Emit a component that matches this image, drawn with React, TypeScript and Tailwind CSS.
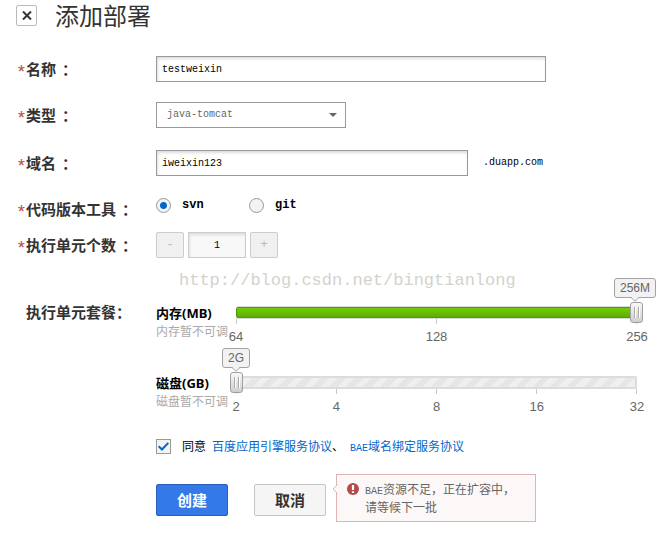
import React, { useState } from 'react';

interface FieldProps {
  label: string;
  htmlFor?: string;
  required?: boolean;
  className?: string;
  children: React.ReactNode;
}

const Field: React.FC<FieldProps> = ({ label, htmlFor, required, className, children }) => (
  <div className={`flex ${className ?? ''}`}>
    <label
      htmlFor={htmlFor}
      className="flex h-[26px] w-[140px] shrink-0 items-center text-[15px] leading-5 font-bold text-[#333]"
    >
      <span className="w-[10px] pt-2 font-['Liberation_Mono'] text-lg leading-5 font-normal text-[#b94a48]">
        {required ? '*' : ''}
      </span>
      <span className={required ? 'mr-[6px]' : ''}>{label}</span>
      <span>：</span>
    </label>
    {children}
  </div>
);

interface SliderProps {
  id: string;
  title: string;
  hint: string;
  bubble: string;
  marks: number[];
  value: number;
}

const Slider: React.FC<SliderProps> = ({ id, title, hint, bubble, marks, value }) => {
  const percent = (value / (marks.length - 1)) * 100;

  return (
    <div className="flex">
      <div className="w-20 shrink-0">
        <label
          htmlFor={id}
          className="block text-[13px] leading-5 font-bold text-black font-['Noto_Sans','Noto_Sans_CJK_SC',sans-serif]"
        >
          {title}
        </label>
        <p className="text-xs leading-4 text-[#aaa]">{hint}</p>
      </div>
      <div className="max-w-[401px] flex-1 pt-[3px]">
        <div className="relative h-[13px] rounded-xs border-y-2 border-r-2 border-[#dcdcdc] bg-[repeating-linear-gradient(135deg,#e6e6e6_0px,#e6e6e6_6px,#efefef_6px,#efefef_12px)]">
          {percent > 0 && (
            <div
              className="absolute -top-px h-[11px] rounded-l-xs border border-[#4f9a0c] bg-linear-to-b from-[#74cc0c] to-[#5cb000]"
              style={{ width: `${percent}%` }}
            />
          )}
          <input
            id={id}
            type="range"
            min={0}
            max={marks.length - 1}
            value={value}
            disabled
            readOnly
            className="absolute -top-[6px] -left-[6px] h-[21px] w-[calc(100%+14px)] appearance-none bg-transparent [&::-webkit-slider-thumb]:h-[21px] [&::-webkit-slider-thumb]:w-[13px] [&::-webkit-slider-thumb]:appearance-none [&::-webkit-slider-thumb]:rounded-[3px] [&::-webkit-slider-thumb]:border [&::-webkit-slider-thumb]:border-[#a0a0a0] [&::-webkit-slider-thumb]:bg-[linear-gradient(90deg,transparent_3px,#aaa_3px,#aaa_4px,#fff_4px,#fff_5px,transparent_5px,transparent_7px,#aaa_7px,#aaa_8px,#fff_8px,#fff_9px,transparent_9px),linear-gradient(#f8f8f8,#cfcfcf)] [&::-webkit-slider-thumb]:bg-[size:100%_11px,100%_100%] [&::-webkit-slider-thumb]:bg-[position:0_4px,0_0] [&::-webkit-slider-thumb]:bg-no-repeat"
          />
          <div
            className="absolute bottom-[19px] flex w-0 justify-center"
            style={{ left: `${percent}%` }}
          >
            <output
              htmlFor={id}
              className="relative h-[20px] rounded-[3px] border border-[#a3a3a3] bg-[#f2f2f2] px-[5px] font-['Liberation_Sans'] text-xs leading-[18px] text-[#666]"
            >
              {bubble}
              <svg className="absolute top-[18px] left-1/2 -ml-1" width="8" height="5" viewBox="0 0 8 5">
                <path d="M0 0h8L4 4z" fill="#f2f2f2" />
                <path d="M0 .5L4 4.3 8 .5" fill="none" stroke="#a3a3a3" />
              </svg>
            </output>
          </div>
        </div>
        <div className="flex h-[5px] justify-between">
          {marks.map((mark) => (
            <span key={mark} className="w-px bg-[#c8c8c8]" />
          ))}
        </div>
        <div className="mt-[3px] flex justify-between font-['Liberation_Sans'] text-[13px] leading-5 text-[#666]">
          {marks.map((mark) => (
            <span key={mark} className="flex w-0 justify-center">
              {mark}
            </span>
          ))}
        </div>
      </div>
    </div>
  );
};

const inputClass =
  "h-[26px] w-full border border-[#999] bg-white px-[5px] font-['Liberation_Mono'] text-[10px] text-black shadow-[inset_1px_2px_3px_#ddd] outline-none";
const stepClass =
  "h-[26px] w-7 rounded-xs border border-[#ccc] bg-[#f0f0f0] pb-px font-['Liberation_Mono'] text-xs text-[#b8b8b8]";

const tools = ['svn', 'git'];

export default function App() {
  const [name, setName] = useState('testweixin');
  const [domain, setDomain] = useState('iweixin123');
  const [tool, setTool] = useState('svn');
  const [agreed, setAgreed] = useState(true);

  return (
    <div className="min-h-screen bg-white pr-3 pb-4 pl-4 font-['Noto_Sans_CJK_SC',sans-serif] text-xs text-black">
      <header className="flex h-[30px] items-center">
        <button
          type="button"
          aria-label="关闭"
          className="flex h-[21px] w-[21px] items-center justify-center rounded-xs border border-[#bbb] bg-white"
        >
          <svg width="10" height="9" viewBox="0 0 10 9" fill="none" stroke="#333" strokeWidth="2">
            <path d="M1 .5l8 8M9 .5l-8 8" />
          </svg>
        </button>
        <h1 className="ml-[18px] pt-1 font-['Liberation_Sans','Noto_Sans_CJK_SC',sans-serif] text-2xl leading-[26px] text-[#333]">
          添加部署
        </h1>
      </header>

      <form onSubmit={(e) => e.preventDefault()}>
        <Field label="名称" htmlFor="name" required className="mt-[26px]">
          <div className="max-w-[390px] flex-1">
            <input id="name" value={name} onChange={(e) => setName(e.target.value)} className={inputClass} />
          </div>
        </Field>

        <Field label="类型" htmlFor="type" required className="mt-5">
          <div className="relative max-w-[190px] flex-1">
            <select
              id="type"
              className="h-[26px] w-full appearance-none border border-[#999] bg-white px-[10px] font-['Liberation_Mono'] text-[10px] text-[#666] outline-none"
            >
              <option>java-tomcat</option>
            </select>
            <svg className="pointer-events-none absolute top-[11px] right-[9px]" width="8" height="4" viewBox="0 0 8 4">
              <path d="M0 0h8L4 4z" fill="#666" />
            </svg>
          </div>
        </Field>

        <Field label="域名" htmlFor="domain" required className="mt-[22px]">
          <div className="max-w-[312px] flex-1">
            <input id="domain" value={domain} onChange={(e) => setDomain(e.target.value)} className={inputClass} />
          </div>
          <span className="ml-[15px] font-['Liberation_Mono'] text-[10px] leading-[26px]">.duapp.com</span>
        </Field>

        <Field label="代码版本工具" required className="mt-5">
          {tools.map((item) => (
            <label
              key={item}
              className="flex h-[18px] w-[93px] items-center font-['Liberation_Mono'] text-xs font-bold"
            >
              <input
                type="radio"
                name="tool"
                checked={tool === item}
                onChange={() => setTool(item)}
                className="mr-[11px] h-[15px] w-[15px] appearance-none rounded-full border border-[#999] bg-[#f3f3f3] checked:bg-[radial-gradient(circle,#0066cc_3px,#f3f3f3_4px)]"
              />
              {item}
            </label>
          ))}
        </Field>

        <Field label="执行单元个数" htmlFor="count" required className="mt-[10px]">
          <div className="flex gap-1">
            <button type="button" disabled aria-label="减少" className={stepClass}>
              -
            </button>
            <input
              id="count"
              value="1"
              readOnly
              className="h-[26px] w-[58px] border border-[#ccc] bg-[#f8f8f8] text-center font-['Liberation_Mono'] text-[10px] shadow-[inset_1px_2px_3px_#ddd] outline-none"
            />
            <button type="button" disabled aria-label="增加" className={stepClass}>
              +
            </button>
          </div>
        </Field>

        <p className="mt-[13px] pl-[163px] font-['Liberation_Mono'] text-[17px] leading-5 text-[#d3d3cb]">
          http://blog.csdn.net/bingtianlong
        </p>

        <Field label="执行单元套餐" htmlFor="memory" className="mt-2">
          <div className="flex flex-1 flex-col gap-[26px] pt-1">
            <Slider id="memory" title="内存(MB)" hint="内存暂不可调" bubble="256M" marks={[64, 128, 256]} value={2} />
            <Slider id="disk" title="磁盘(GB)" hint="磁盘暂不可调" bubble="2G" marks={[2, 4, 8, 16, 32]} value={0} />
          </div>
        </Field>

        <div className="mt-[21px] flex h-4 items-center pl-[140px]">
          <label className="relative flex items-center">
            <input
              type="checkbox"
              checked={agreed}
              onChange={(e) => setAgreed(e.target.checked)}
              className="peer mr-[11px] h-[15px] w-[15px] appearance-none border border-[#999] bg-[#f3f3f3]"
            />
            <svg
              className="pointer-events-none invisible absolute top-1 left-[2px] peer-checked:visible"
              width="11"
              height="9"
              viewBox="0 0 11 9"
              fill="none"
              stroke="#0066cc"
              strokeWidth="2"
            >
              <path d="M.7 4.2l3.3 3.3L10.3.9" />
            </svg>
            同意
          </label>
          <a href="#service" className="ml-[6px] text-[#0066cc]">
            百度应用引擎服务协议
          </a>
          <span>、</span>
          <a href="#domain-binding" className="ml-[6px] text-[#0066cc]">
            <span className="font-['Liberation_Mono'] text-[10px] leading-none">BAE</span>域名绑定服务协议
          </a>
        </div>

        <div className="mt-5 flex items-start pl-[140px]">
          <button
            type="submit"
            className="mt-[10px] h-8 w-[72px] shrink-0 rounded-xs border border-[#2a5fc0] bg-[#337ae8] text-[15px] font-bold text-white"
          >
            创建
          </button>
          <button
            type="button"
            className="mt-[10px] ml-[26px] h-8 w-[72px] shrink-0 rounded-xs border border-[#c6c6c6] bg-[#f5f5f5] text-[15px] font-bold text-[#333]"
          >
            取消
          </button>
          <div
            role="alert"
            className="relative ml-[10px] flex max-w-[200px] flex-1 border border-[#e0b4b4] bg-[#fcf8f7] py-[5px] pl-[10px] text-[#666]"
          >
            <svg className="absolute top-[9px] -left-[5px]" width="6" height="10" viewBox="0 0 6 10">
              <path d="M6 0L1 5l5 5z" fill="#fcf8f7" />
              <path d="M5.5.5L1 5l4.500 4.500" fill="none" stroke="#e0b4b4" />
            </svg>
            <svg className="mt-[3px] mr-[6px] shrink-0" width="12" height="12" viewBox="0 0 12 12">
              <circle cx="6" cy="6" r="6" fill="#b34a4a" />
              <path d="M4.900 2h2.200v5H4.900zM4.900 8.200h2.200v1.900H4.900z" fill="#fff" />
            </svg>
            <p className="leading-[18px]">
              <span className="font-['Liberation_Mono'] text-[10px] leading-none">BAE</span>资源不足，正在扩容中，
              <br />
              请等候下一批
            </p>
          </div>
        </div>
      </form>
    </div>
  );
}
